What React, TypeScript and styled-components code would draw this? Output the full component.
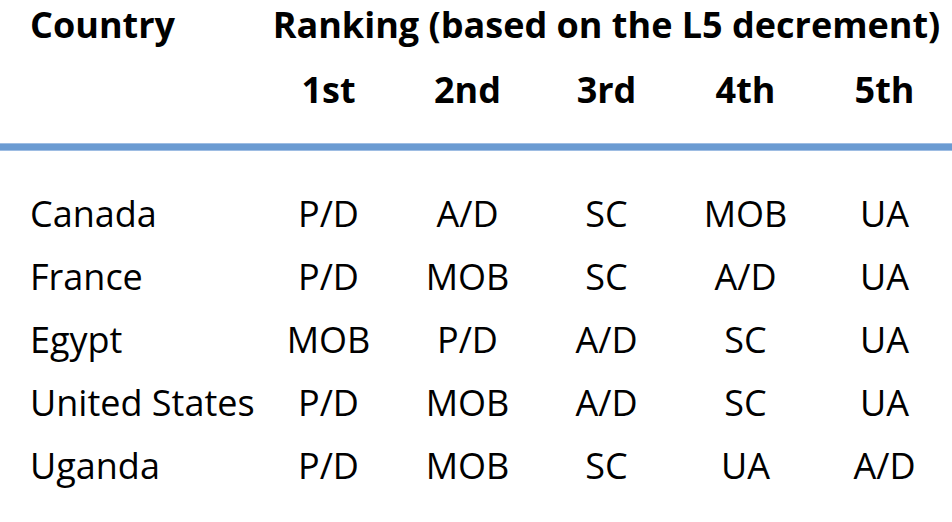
import React from "react";
import styled, { createGlobalStyle } from "styled-components";

const Global = createGlobalStyle`
  html, body { margin: 0; padding: 0; background: #ffffff; }
  body { font-family: "Open Sans", "Noto Sans", sans-serif; color: #000; overflow: hidden; }
`;

const Table = styled.div`
  display: grid;
  grid-template-columns: 259px repeat(5, 139px);
  width: 952px;
  overflow: hidden;
  font-size: 36px;
`;

const HeadCell = styled.div<{ $span?: boolean; $left?: boolean; $second?: boolean }>`
  font-weight: 700;
  line-height: 49px;
  white-space: nowrap;
  text-align: ${(p) => (p.$left ? "left" : "center")};
  padding-left: ${(p) => (p.$left ? "30px" : "0")};
  grid-column: ${(p) => (p.$span ? "2 / span 5" : "auto")};
  margin-top: ${(p) => (p.$second ? "16px" : "0")};
`;

const Rule = styled.div`
  grid-column: 1 / -1;
  height: 8px;
  margin: 29px 0 31px;
  background: #6b9bd2;
  box-shadow: inset 0 1px 0 #9ebde3, inset 0 -1px 0 #9ebde3;
`;

const Cell = styled.div<{ $left?: boolean }>`
  line-height: 63px;
  white-space: nowrap;
  text-align: ${(p) => (p.$left ? "left" : "center")};
  padding-left: ${(p) => (p.$left ? "30px" : "0")};
`;

const rows: [string, string[]][] = [
  ["Canada", ["P/D", "A/D", "SC", "MOB", "UA"]],
  ["France", ["P/D", "MOB", "SC", "A/D", "UA"]],
  ["Egypt", ["MOB", "P/D", "A/D", "SC", "UA"]],
  ["United States", ["P/D", "MOB", "A/D", "SC", "UA"]],
  ["Uganda", ["P/D", "MOB", "SC", "UA", "A/D"]],
];

export default function App() {
  return (
    <>
      <Global />
      <Table>
        <HeadCell $left>Country</HeadCell>
        <HeadCell $span>Ranking (based on the L5 decrement)</HeadCell>
        <HeadCell $second />
        {["1st", "2nd", "3rd", "4th", "5th"].map((h) => (
          <HeadCell key={h} $second>
            {h}
          </HeadCell>
        ))}
        <Rule />
        {rows.map(([country, vals]) => (
          <React.Fragment key={country}>
            <Cell $left>{country}</Cell>
            {vals.map((v, i) => (
              <Cell key={i}>{v}</Cell>
            ))}
          </React.Fragment>
        ))}
      </Table>
    </>
  );
}
